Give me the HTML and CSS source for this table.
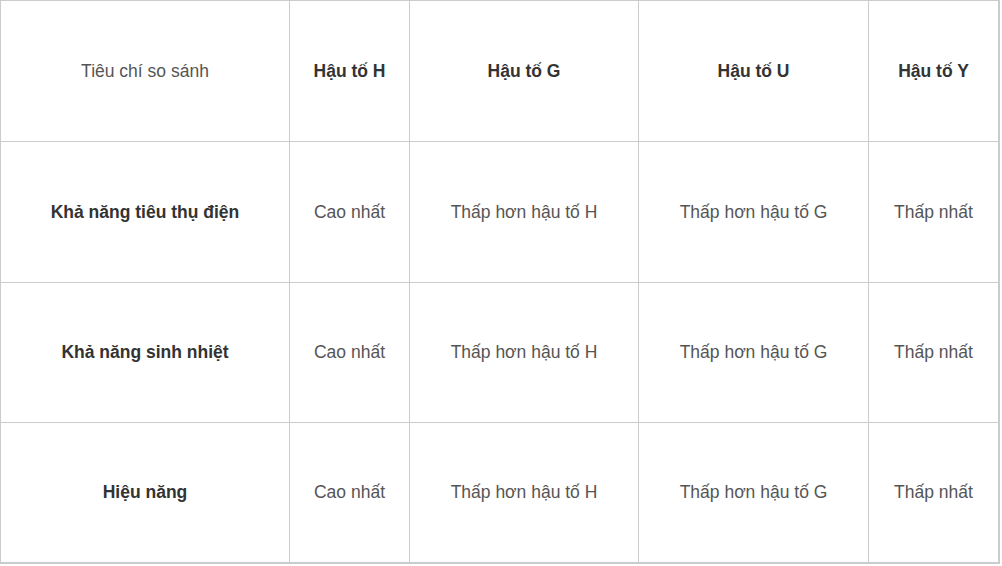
FILE: index.html
```html
<!DOCTYPE html>
<html lang="vi">
<head>
<meta charset="utf-8">
<title>So sánh hậu tố</title>
<link rel="stylesheet" href="styles.css">
</head>
<body>
<table class="cmp">
  <colgroup>
    <col class="c1"><col class="c2"><col class="c3"><col class="c4"><col class="c5">
  </colgroup>
  <tbody>
    <tr class="r1">
      <td>Tiêu chí so sánh</td>
      <td class="b">Hậu tố H</td>
      <td class="b">Hậu tố G</td>
      <td class="b">Hậu tố U</td>
      <td class="b">Hậu tố Y</td>
    </tr>
    <tr class="r2">
      <td class="b">Khả năng tiêu thụ điện</td>
      <td>Cao nhất</td>
      <td>Thấp hơn hậu tố H</td>
      <td>Thấp hơn hậu tố G</td>
      <td>Thấp nhất</td>
    </tr>
    <tr class="r3">
      <td class="b">Khả năng sinh nhiệt</td>
      <td>Cao nhất</td>
      <td>Thấp hơn hậu tố H</td>
      <td>Thấp hơn hậu tố G</td>
      <td>Thấp nhất</td>
    </tr>
    <tr class="r4">
      <td class="b">Hiệu năng</td>
      <td>Cao nhất</td>
      <td>Thấp hơn hậu tố H</td>
      <td>Thấp hơn hậu tố G</td>
      <td>Thấp nhất</td>
    </tr>
  </tbody>
</table>
</body>
</html>
```
FILE: styles.css
```css
html, body {
  margin: 0;
  padding: 0;
  background: #fff;
}
.cmp {
  border-collapse: separate;
  border-spacing: 0;
  table-layout: fixed;
  width: 1000px;
  font-family: "Liberation Sans", Arial, sans-serif;
  font-size: 17.5px;
  color: #555;
}
.c1 { width: 290px; }
.c2 { width: 120px; }
.c3 { width: 229px; }
.c4 { width: 230px; }
.c5 { width: 131px; }
.cmp td {
  box-sizing: border-box;
  padding: 0;
  text-align: center;
  vertical-align: middle;
  border-right: 1px solid #ccc;
  border-bottom: 1px solid #ccc;
}
.cmp td:first-child { border-left: 1px solid #ccc; }
.cmp td:last-child { border-right: 2px solid #ccc; }
.r1 td { border-top: 1px solid #ccc; height: 142px; }
.r2 td { height: 141px; }
.r3 td { height: 140px; }
.r4 td { height: 141px; border-bottom: 2px solid #ccc; }
.cmp td.b {
  font-weight: bold;
  color: #333;
}
```
